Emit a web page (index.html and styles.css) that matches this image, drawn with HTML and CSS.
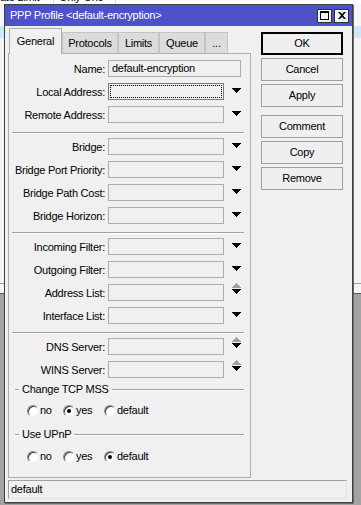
FILE: index.html
```html
<!DOCTYPE html>
<html>
<head>
<meta charset="utf-8">
<link rel="stylesheet" href="styles.css">
</head>
<body>
<div class="bgtop"><span class="c1">ate Limit</span><span class="c2">Only One</span></div>
<div class="window">
  <div class="titlebar">
    <span class="title">PPP Profile &lt;default-encryption&gt;</span>
    <div class="tbtns">
      <span class="tb"><svg width="9" height="9" viewBox="0 0 9 9"><path d="M0 0H9V9H0Z M1 2V8H8V2Z" fill="#000" fill-rule="evenodd"/></svg></span>
      <span class="tb"><svg width="8" height="7" viewBox="0 0 8 7"><path d="M0 0H2L4 2L6 0H8L5 3.5L8 7H6L4 5L2 7H0L3 3.5Z" fill="#000"/></svg></span>
    </div>
  </div>
  <div class="main">
    <div class="left">
      <div class="tabs">
        <div class="tab active w1">General</div>
        <div class="tab w2">Protocols</div>
        <div class="tab w3">Limits</div>
        <div class="tab w4">Queue</div>
        <div class="tab w5">...</div>
        <div class="tabfill"></div>
      </div>
      <div class="panel">
        <div class="group first">
          <div class="row"><span class="lbl">Name:</span><span class="field wide">default-encryption</span></div>
          <div class="row"><span class="lbl">Local Address:</span><span class="field focus"></span><svg class="dd" width="9" height="5" viewBox="0 0 9 5"><path d="M0 0H9V1H8V2H7V3H6V4H5V5H4V4H3V3H2V2H1V1H0Z"/></svg></div>
          <div class="row"><span class="lbl">Remote Address:</span><span class="field"></span><svg class="dd" width="9" height="5" viewBox="0 0 9 5"><path d="M0 0H9V1H8V2H7V3H6V4H5V5H4V4H3V3H2V2H1V1H0Z"/></svg></div>
        </div>
        <div class="sep"></div>
        <div class="group">
          <div class="row"><span class="lbl">Bridge:</span><span class="field"></span><svg class="dd" width="9" height="5" viewBox="0 0 9 5"><path d="M0 0H9V1H8V2H7V3H6V4H5V5H4V4H3V3H2V2H1V1H0Z"/></svg></div>
          <div class="row"><span class="lbl">Bridge Port Priority:</span><span class="field"></span><svg class="dd" width="9" height="5" viewBox="0 0 9 5"><path d="M0 0H9V1H8V2H7V3H6V4H5V5H4V4H3V3H2V2H1V1H0Z"/></svg></div>
          <div class="row"><span class="lbl">Bridge Path Cost:</span><span class="field"></span><svg class="dd" width="9" height="5" viewBox="0 0 9 5"><path d="M0 0H9V1H8V2H7V3H6V4H5V5H4V4H3V3H2V2H1V1H0Z"/></svg></div>
          <div class="row"><span class="lbl">Bridge Horizon:</span><span class="field"></span><svg class="dd" width="9" height="5" viewBox="0 0 9 5"><path d="M0 0H9V1H8V2H7V3H6V4H5V5H4V4H3V3H2V2H1V1H0Z"/></svg></div>
        </div>
        <div class="sep"></div>
        <div class="group">
          <div class="row"><span class="lbl">Incoming Filter:</span><span class="field"></span><svg class="dd" width="9" height="5" viewBox="0 0 9 5"><path d="M0 0H9V1H8V2H7V3H6V4H5V5H4V4H3V3H2V2H1V1H0Z"/></svg></div>
          <div class="row"><span class="lbl">Outgoing Filter:</span><span class="field"></span><svg class="dd" width="9" height="5" viewBox="0 0 9 5"><path d="M0 0H9V1H8V2H7V3H6V4H5V5H4V4H3V3H2V2H1V1H0Z"/></svg></div>
          <div class="row"><span class="lbl">Address List:</span><span class="field"></span><svg class="spin" width="9" height="11" viewBox="0 0 9 11"><path d="M4 0H5V1H6V2H7V3H8V4H9V5H0V4H1V3H2V2H3V1H4Z" fill="#a0a0a0"/><path d="M0 6H9V7H8V8H7V9H6V10H5V11H4V10H3V9H2V8H1V7H0Z" fill="#000"/></svg></div>
          <div class="row"><span class="lbl">Interface List:</span><span class="field"></span><svg class="dd" width="9" height="5" viewBox="0 0 9 5"><path d="M0 0H9V1H8V2H7V3H6V4H5V5H4V4H3V3H2V2H1V1H0Z"/></svg></div>
        </div>
        <div class="sep"></div>
        <div class="group">
          <div class="row"><span class="lbl">DNS Server:</span><span class="field"></span><svg class="spin" width="9" height="11" viewBox="0 0 9 11"><path d="M4 0H5V1H6V2H7V3H8V4H9V5H0V4H1V3H2V2H3V1H4Z" fill="#a0a0a0"/><path d="M0 6H9V7H8V8H7V9H6V10H5V11H4V10H3V9H2V8H1V7H0Z" fill="#000"/></svg></div>
          <div class="row"><span class="lbl">WINS Server:</span><span class="field"></span><svg class="spin" width="9" height="11" viewBox="0 0 9 11"><path d="M4 0H5V1H6V2H7V3H8V4H9V5H0V4H1V3H2V2H3V1H4Z" fill="#a0a0a0"/><path d="M0 6H9V7H8V8H7V9H6V10H5V11H4V10H3V9H2V8H1V7H0Z" fill="#000"/></svg></div>
        </div>
        <div class="gh gh1"><span>Change TCP MSS</span></div>
        <div class="radios r1">
          <span class="opt o1"><span class="radio"></span>no</span>
          <span class="opt o2"><span class="radio on"></span>yes</span>
          <span class="opt"><span class="radio"></span>default</span>
        </div>
        <div class="gh gh2"><span>Use UPnP</span></div>
        <div class="radios r2">
          <span class="opt o1"><span class="radio"></span>no</span>
          <span class="opt o2"><span class="radio"></span>yes</span>
          <span class="opt"><span class="radio on"></span>default</span>
        </div>
      </div>
    </div>
    <div class="buttons">
      <div class="btn default">OK</div>
      <div class="btn">Cancel</div>
      <div class="btn">Apply</div>
      <div class="btn spaced">Comment</div>
      <div class="btn">Copy</div>
      <div class="btn">Remove</div>
    </div>
  </div>
  <div class="status">default</div>
</div>
</body>
</html>
```

FILE: styles.css
```css
html, body {
  margin: 0;
  padding: 0;
}
body {
  width: 361px;
  height: 505px;
  overflow: hidden;
  font-family: "Liberation Sans", Arial, sans-serif;
  font-size: 11px;
  letter-spacing: -0.25px;
  color: #000;
  background:
    linear-gradient(#f7f7f7, #f7f7f7) 0 0 / 100% 26px no-repeat,
    linear-gradient(#cce8ff, #cce8ff) 0 26px / 100% 12px no-repeat,
    linear-gradient(#f4f4f4, #f4f4f4) 0 38px / 100% 245px no-repeat,
    linear-gradient(#9a9a9a, #9a9a9a) 0 283px / 100% 1px no-repeat,
    linear-gradient(#f4f4f4, #f4f4f4) 0 284px / 100% 9px no-repeat,
    linear-gradient(#555555, #555555) 0 293px / 100% 1px no-repeat,
    #a3a3a3;
}
.bgtop {
  height: 4px;
  overflow: hidden;
  display: flex;
  background: #fff;
}
.bgtop span {
  display: block;
  line-height: 12px;
  margin-top: -9px;
  height: 16px;
  border-right: 1px solid #d8d8d8;
}
.bgtop .c1 { width: 53px; }
.bgtop .c2 { width: 56px; padding-left: 5px; }

.window {
  box-sizing: border-box;
  margin-left: 4px;
  width: 349px;
  height: 499px;
  border: 1px solid #404040;
  box-shadow: 1px 1px 0 #6a6a6a;
  background: #f0f0f0;
  display: flex;
  flex-direction: column;
}
.titlebar {
  height: 21px;
  flex: none;
  background: #4d52c8;
  color: #fff;
  display: flex;
  align-items: center;
  justify-content: space-between;
  padding: 0 3px 0 5px;
}
.title {
  line-height: 13px;
}
.tbtns {
  display: flex;
  gap: 2px;
}
.tb {
  box-sizing: border-box;
  width: 15px;
  height: 14px;
  background: #f0f0f0;
  border: 1px solid #303030;
  box-shadow: inset 1px 1px 0 #fff;
  display: flex;
  align-items: center;
  justify-content: center;
}
.tb svg { display: block; }

.main {
  flex: 1;
  display: flex;
  padding: 2px 0 0 3px;
  gap: 10px;
  min-height: 0;
}
.left {
  width: 243px;
  display: flex;
  flex-direction: column;
}
.tabs {
  height: 26px;
  flex: none;
  display: flex;
  align-items: flex-end;
}
.tabs::before {
  content: "";
  width: 1px;
  height: 0;
  border-bottom: 1px solid #adadad;
  align-self: flex-end;
}
.tab {
  box-sizing: border-box;
  height: 22px;
  padding-top: 4px;
  line-height: 13px;
  text-align: center;
  background: #dcdcdc;
  border: 1px solid #c4c4c4;
  border-bottom-color: #adadad;
}
.tab.active {
  height: 26px;
  padding-top: 6px;
  background: #f0f0f0;
  border-color: #adadad;
  border-bottom: none;
}
.w1 { width: 53px; }
.w2 { width: 56px; }
.w3 { width: 41px; }
.w4 { width: 46px; }
.w5 { width: 23px; }
.tabfill {
  flex: 1;
  height: 0;
  border-bottom: 1px solid #adadad;
}
.panel {
  flex: 1;
  border: 1px solid #adadad;
  border-top: none;
  padding-top: 6px;
}
.row {
  display: flex;
  align-items: center;
  height: 17px;
  margin-bottom: 6px;
}
.group .row:last-child { margin-bottom: 0; }
.lbl {
  width: 96px;
  margin-right: 3px;
  text-align: right;
  white-space: nowrap;
  line-height: 13px;
  padding-top: 2px;
}
.field {
  box-sizing: border-box;
  width: 116px;
  height: 17px;
  border: 1px solid #adadad;
  background: #f0f0f0;
  padding-left: 3px;
  line-height: 15px;
  white-space: nowrap;
}
.field.wide { width: 133px; }
.field.focus {
  border-color: #7a7a7a;
  outline: 1px dotted #000;
  outline-offset: -3px;
}
.dd {
  display: block;
  margin-left: 8px;
  align-self: flex-start;
  margin-top: 5px;
}
.spin {
  display: block;
  margin-left: 8px;
  align-self: flex-start;
  margin-top: -1px;
}
.sep {
  height: 0;
  border-top: 1px solid #a0a0a0;
  border-bottom: 1px solid #fff;
  margin: 8px 6px 4px 3px;
}
.group.first + .sep { margin-top: 9px; }

.gh {
  display: flex;
  align-items: center;
  height: 13px;
  line-height: 13px;
  margin: 5px 6px 0 6px;
}
.gh::before, .gh::after {
  content: "";
  height: 0;
  border-top: 1px solid #a0a0a0;
  border-bottom: 1px solid #fff;
}
.gh::before { width: 4px; margin-right: 3px; }
.gh::after { flex: 1; margin-left: 3px; }
.gh2 { margin-top: 11px; }
.radios {
  display: flex;
  height: 13px;
  line-height: 13px;
  padding-left: 18px;
  margin-top: 8px;
}
.r2 { margin-top: 9px; }
.opt {
  display: flex;
  align-items: center;
}
.o1 { width: 36px; }
.o2 { width: 41px; }
.radio {
  box-sizing: border-box;
  width: 12px;
  height: 12px;
  border-radius: 50%;
  background: #fff;
  border: 1px solid;
  border-color: #8a8a8a #f0f0f0 #f0f0f0 #8a8a8a;
  box-shadow: inset 1px 1px 0 #404040;
  margin-right: 1px;
  display: flex;
  align-items: center;
  justify-content: center;
}
.radio.on::after {
  content: "";
  width: 4px;
  height: 4px;
  border-radius: 50%;
  background: #000;
}

.buttons {
  width: 82px;
  display: flex;
  flex-direction: column;
  padding-top: 4px;
}
.btn {
  box-sizing: border-box;
  height: 23px;
  margin-bottom: 3px;
  border: 1px solid #a0a0a0;
  background: #efefef;
  text-align: center;
  line-height: 21px;
}
.btn.default {
  border: 2px solid #000;
  line-height: 19px;
}
.btn.spaced { margin-top: 5px; }

.status {
  flex: none;
  box-sizing: border-box;
  height: 19px;
  margin: 2px 5px 3px 3px;
  border: 1px solid;
  border-color: #a0a0a0 #e4e4e4 #e4e4e4 #a0a0a0;
  padding-left: 2px;
  line-height: 16px;
}
```
